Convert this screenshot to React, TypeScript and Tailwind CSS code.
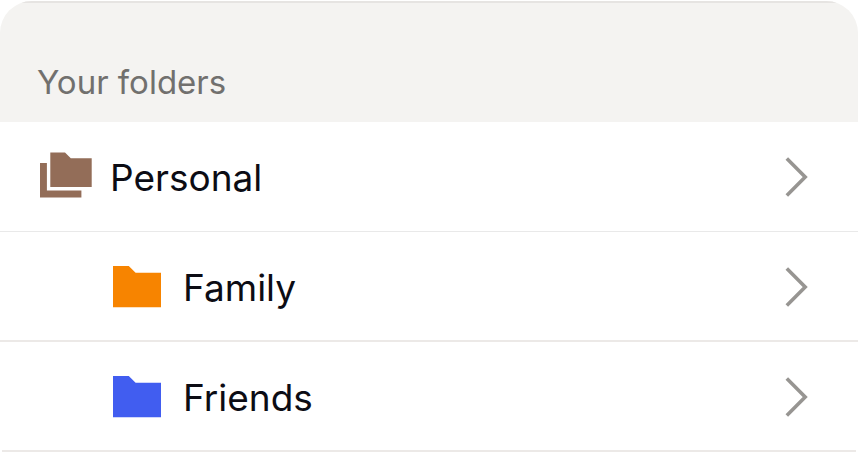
type Folder = {
  id: string;
  name: string;
  color: string;
  nested: boolean;
};

const folders: Folder[] = [
  { id: 'personal', name: 'Personal', color: '#936d58', nested: false },
  { id: 'family', name: 'Family', color: '#f78400', nested: true },
  { id: 'friends', name: 'Friends', color: '#415df0', nested: true },
];

function FolderIcon({ color }: { color: string }) {
  return (
    <svg width="48" height="42" viewBox="0 0 48 42" fill={color} className="shrink-0" aria-hidden="true">
      <path d="M0 0H15.8L22.6 6.8H48.3V41.2H0Z" />
    </svg>
  );
}

function FoldersIcon({ color }: { color: string }) {
  return (
    <svg width="52" height="50" viewBox="0 0 52 50" fill={color} className="shrink-0" aria-hidden="true">
      <path d="M10.3 0.5H25L30.8 6.2H51.7V35.1H10.3Z" />
      <path d="M0 11H6.9V38.4H41.4V45.4H0Z" />
    </svg>
  );
}

function Chevron() {
  return (
    <svg width="24" height="42" viewBox="0 0 24 42" fill="none" className="shrink-0" aria-hidden="true">
      <path d="M2.8 2.4L21.2 21L2.8 39.4" stroke="#979592" strokeWidth="3.6" />
    </svg>
  );
}

function FolderRow({ folder }: { folder: Folder }) {
  return (
    <li className={folder.nested ? 'border-b-2 border-[#ece9e7] last:border-b-0' : 'border-b border-[#e9e9e9]'}>
      <button
        type="button"
        className={`flex w-full items-center pr-[50px] text-left ${
          folder.nested ? 'h-[108px] gap-[22px] pt-0.5 pl-[113px]' : 'h-[109px] gap-[18px] pt-px pl-10'
        }`}
      >
        {folder.nested ? <FolderIcon color={folder.color} /> : <FoldersIcon color={folder.color} />}
        <span className="flex-1 pt-0.5 text-[37px] leading-[46px] text-[#0c0c14]">{folder.name}</span>
        <Chevron />
      </button>
    </li>
  );
}

export default function App() {
  return (
    <section className="bg-white pt-px font-['Inter',sans-serif]">
      <header className="overflow-hidden rounded-t-[32px] bg-[#f4f3f1]">
        <div className="border-t-2 border-[#e6e4e2] px-[37px] pt-[59px] pb-[19px]">
          <h2 className="text-[33px] leading-[41px] text-[#71706e]">Your folders</h2>
        </div>
      </header>
      <ul>
        {folders.map((folder) => (
          <FolderRow key={folder.id} folder={folder} />
        ))}
      </ul>
      <hr className="mx-0.5 border-t-2 border-[#ece9e7]" />
    </section>
  );
}
